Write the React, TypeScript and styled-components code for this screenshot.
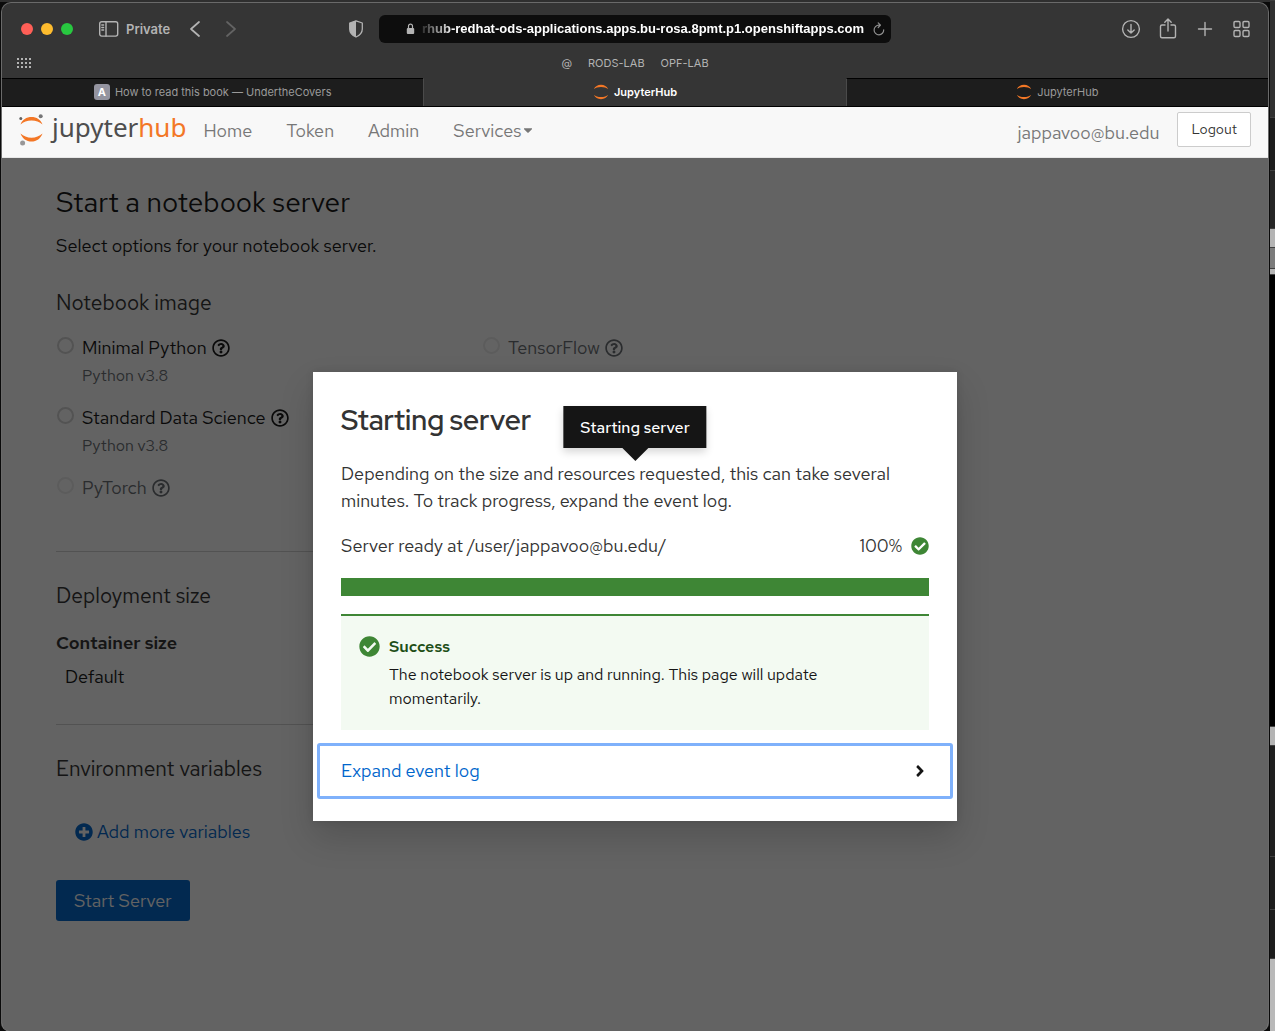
import React from 'react';
import styled, { createGlobalStyle, css } from 'styled-components';
import {
  FaAngleRight,
  FaCaretDown,
  FaCheckCircle,
  FaPlusCircle,
  FaRegQuestionCircle,
} from 'react-icons/fa';

const GlobalStyle = createGlobalStyle`
  *, *::before, *::after { box-sizing: border-box; }
  html, body, #root { height: 100%; margin: 0; }
  body {
    background: #000;
    color: #151515;
    font-family: 'Red Hat Text', Lato, sans-serif;
    font-size: 18px;
    line-height: 27px;
  }
  h1, h2, h3, p { margin: 0; }
  button, input, select { font: inherit; }
  a { color: inherit; text-decoration: none; }
`;

/* ---------- Desktop and window ---------- */

const Desktop = styled.div`
  display: flex;
  min-height: 100vh;
  background: linear-gradient(#2f2f2f 0 2px, #0a0a0a 2px);
`;

const BrowserWindow = styled.div`
  flex: 1;
  min-width: 0;
  display: flex;
  flex-direction: column;
  margin: 2px 1px 0 1px;
  border: 1px solid #6a6a6a;
  border-bottom: 0;
  border-radius: 10px 10px 8px 8px;
  overflow: hidden;
  background: #353535;
`;

const Behind = styled.div`
  width: 5px;
  display: flex;
  flex-direction: column;
`;

const BehindPart = styled.div<{ $share: number; $color: string }>`
  flex: ${(p) => p.$share} 0 0;
  background: ${(p) => p.$color};
  border-top: 1px solid #3f3f3f;
`;

const behindParts = [
  { share: 117, color: '#303030' },
  { share: 53, color: '#1d1d1d' },
  { share: 58, color: '#262626' },
  { share: 18, color: '#b4b4b4' },
  { share: 20, color: '#7b7b7b' },
  { share: 5, color: '#b4b4b4' },
  { share: 456, color: '#000' },
  { share: 19, color: '#b4b4b4' },
  { share: 111, color: '#1f1f1f' },
  { share: 53, color: '#1d1d1d' },
  { share: 48, color: '#1d1d1d' },
  { share: 73, color: '#b9b9b9' },
];

/* ---------- Browser chrome ---------- */

const Chrome = styled.header`
  font-family: Inter, sans-serif;
  font-size: 11px;
  line-height: 16px;
  color: #b3b3b3;
`;

const Toolbar = styled.div`
  display: grid;
  grid-template-columns: 1fr 512px 1fr;
  align-items: center;
  height: 52px;
`;

const ToolbarSide = styled.div<{ $end?: boolean }>`
  display: flex;
  align-items: center;
  height: 28px;
  padding: ${(p) => (p.$end ? '0 18px 0 0' : '0 15px 0 19px')};
  gap: ${(p) => (p.$end ? '18px' : '0')};
  justify-content: ${(p) => (p.$end ? 'flex-end' : 'flex-start')};
`;

const IconButton = styled.button<{ $dim?: boolean }>`
  display: inline-flex;
  align-items: center;
  justify-content: center;
  padding: 0;
  border: 0;
  background: none;
  color: ${(p) => (p.$dim ? '#636363' : '#b3b3b3')};
`;

const Lights = styled.div`
  display: flex;
  gap: 8px;
  margin-right: 26px;
`;

const Light = styled.button<{ $color: string }>`
  width: 12px;
  height: 12px;
  padding: 0;
  border: 0;
  border-radius: 50%;
  background: ${(p) => p.$color};
`;

const PrivateLabel = styled.span`
  margin: 0 20px 0 7px;
  font-size: 13px;
  font-weight: 600;
`;

const History = styled.div`
  display: flex;
  gap: 26px;
  flex: 1;
`;

const AddressBar = styled.div`
  display: flex;
  align-items: center;
  height: 28px;
  padding: 0 5px 0 27px;
  gap: 7px;
  border-radius: 6px;
  background: #0d0d0d;
`;

const Address = styled.input`
  flex: 1;
  min-width: 0;
  padding: 0;
  border: 0;
  outline: 0;
  background: none;
  color: #fff;
  font-family: 'Liberation Sans', Arial, sans-serif;
  font-size: 13px;
  font-weight: 700;
  mask-image: linear-gradient(90deg, rgba(0, 0, 0, 0.15), #000 32px);
`;

const Bookmarks = styled.nav`
  display: grid;
  grid-template-columns: 1fr auto 1fr;
  align-items: center;
  height: 23px;
  padding: 0 15px 7px;
`;

const BookmarkLinks = styled.div`
  display: flex;
  gap: 16px;
`;

const Tabs = styled.div`
  display: flex;
  height: 29px;
  border-bottom: 1px solid #000;
`;

const Tab = styled.button<{ $active?: boolean }>`
  flex: 1 1 0;
  display: flex;
  align-items: center;
  justify-content: center;
  gap: 5px;
  padding: 0 0 2px;
  border: 0;
  border-top: 1px solid ${(p) => (p.$active ? '#353535' : '#000')};
  background: ${(p) => (p.$active ? '#353535' : '#1d1d1d')};
  color: ${(p) => (p.$active ? '#fff' : '#9a9a9a')};
  font-weight: ${(p) => (p.$active ? 600 : 400)};
  & + & { border-left: 1px solid #4a4a4a; }
`;

const LetterBadge = styled.span`
  width: 16px;
  height: 16px;
  border-radius: 3px;
  background: #9494a0;
  color: #fff;
  font-weight: 700;
  text-align: center;
`;

/* ---------- JupyterHub navigation ---------- */

const Navbar = styled.nav`
  display: flex;
  align-items: center;
  height: 51px;
  padding: 0 17px;
  border-bottom: 1px solid #e7e7e7;
  background: #f8f8f8;
  color: #777;
`;

const Brand = styled.a`
  display: flex;
  align-items: center;
  gap: 8px;
  height: 44px;
  margin: 0 17px 4px 0;
  color: #4e4e4e;
  font-family: 'Noto Sans', sans-serif;
  font-size: 26px;
  line-height: 32px;
`;

const BrandText = styled.span`
  padding-bottom: 6px;
`;

const BrandHub = styled.span`
  color: #f37726;
`;

const NavLinks = styled.div`
  display: flex;
  gap: 34px;
  flex: 1;
  padding-bottom: 4px;
`;

const NavLink = styled.a`
  display: inline-flex;
  align-items: center;
`;

const User = styled.span`
  margin-right: 18px;
`;

const Logout = styled.a`
  height: 35px;
  padding: 0 13px;
  margin-bottom: 6px;
  border: 1px solid #ccc;
  border-radius: 2px;
  background: #fff;
  color: #333;
  font-size: 14px;
  line-height: 33px;
`;

/* ---------- Spawner form ---------- */

const Content = styled.main`
  flex: 1;
  display: grid;
  background: #fff;
`;

const Form = styled.form`
  grid-area: 1 / 1;
  max-width: 960px;
  padding: 26px 54px 110px;
`;

const PageTitle = styled.h1`
  font-size: 28px;
  font-weight: 400;
  line-height: 36px;
`;

const Lead = styled.p`
  margin-top: 12px;
`;

const Section = styled.section`
  padding: 31px 0 34px;
  & + & { border-top: 1px solid #d2d2d2; }
`;

const SectionTitle = styled.h2`
  color: #333;
  font-size: 21px;
  font-weight: 400;
  line-height: 26px;
`;

const Options = styled.div`
  display: grid;
  grid-template-columns: 1fr 1fr;
  row-gap: 16px;
  margin: 18px 0 16px;
`;

const OptionItem = styled.div`
  display: flex;
  gap: 8px;
`;

const Radio = styled.input`
  appearance: none;
  flex: none;
  width: 17px;
  height: 17px;
  margin: 3px 0 0 1px;
  border: 2px solid #d4d4d4;
  border-radius: 50%;
  &:disabled { border-color: #ececec; }
`;

const OptionLabel = styled.label<{ $off?: boolean }>`
  display: flex;
  align-items: center;
  gap: 5px;
  color: ${(p) => (p.$off ? '#6a6e73' : '#151515')};
`;

const OptionNote = styled.p`
  margin-top: 3px;
  color: #6a6e73;
  font-size: 16px;
  line-height: 24px;
`;

const FieldLabel = styled.label`
  display: block;
  margin-top: 20px;
  color: #333;
  font-weight: 600;
`;

const SizeSelect = styled.select`
  display: block;
  appearance: none;
  margin-top: 7px;
  padding: 0 9px;
  border: 0;
  background: none;
  color: #151515;
`;

const AddButton = styled.button`
  display: flex;
  align-items: center;
  gap: 4px;
  margin: 36px 0 1px 19px;
  padding: 0;
  border: 0;
  background: none;
  color: #06c;
`;

const StartButton = styled.button`
  display: block;
  height: 41px;
  padding: 0 18px;
  border: 0;
  border-radius: 3px;
  background: #06c;
  color: #fff;
`;

/* ---------- Progress dialog ---------- */

const Backdrop = styled.div`
  grid-area: 1 / 1;
  z-index: 1;
  display: grid;
  place-items: center;
  padding: 4px 24px 0;
  background: rgba(3, 3, 3, 0.62);
`;

const Dialog = styled.div`
  position: relative;
  width: 100%;
  max-width: 644px;
  padding: 30px 4px 22px;
  background: #fff;
  color: #333;
  box-shadow: 0 16px 32px rgba(3, 3, 3, 0.16), 0 0 8px rgba(3, 3, 3, 0.1);
`;

const DialogBody = styled.div`
  padding: 0 24px;
`;

const DialogTitle = styled.h1`
  margin-bottom: 22px;
  font-family: 'Red Hat Display', 'Red Hat Text', Lato, sans-serif;
  font-size: 28px;
  font-weight: 600;
  line-height: 36px;
`;

const Status = styled.div`
  display: flex;
  align-items: center;
  justify-content: space-between;
  margin: 18px 0 19px;
`;

const Percent = styled.span`
  display: flex;
  align-items: center;
  gap: 9px;
`;

const success = css`
  color: #3e8635;
`;

const CheckIcon = styled(FaCheckCircle)`
  flex: none;
  ${success}
`;

const ProgressBar = styled.div`
  height: 18px;
  background: #3e8635;
`;

const Alert = styled.div`
  display: flex;
  gap: 9px;
  margin-top: 18px;
  padding: 19px 18px;
  border-top: 2px solid #3e8635;
  background: #f3faf2;
  color: #151515;
  font-size: 16px;
  line-height: 24px;
`;

const AlertIcon = styled.span`
  padding-top: 1px;
  line-height: 0;
`;

const AlertTitle = styled.h2`
  margin-bottom: 4px;
  color: #1e4f18;
  font-size: 16px;
  font-weight: 600;
  line-height: 24px;
`;

const ExpandButton = styled.button`
  display: flex;
  align-items: center;
  justify-content: space-between;
  width: 100%;
  height: 56px;
  margin-top: 13px;
  padding: 0 21px 1px;
  border: 3px solid #7fb1fb;
  border-radius: 3px;
  background: #fff;
  color: #06c;
`;

const Tooltip = styled.div`
  position: absolute;
  top: 34px;
  left: 50%;
  transform: translateX(-50%);
  padding: 10px 17px 8px;
  background: #151515;
  color: #fff;
  font-size: 16px;
  font-weight: 500;
  line-height: 24px;
  white-space: nowrap;
  box-shadow: 0 4px 8px rgba(3, 3, 3, 0.16);
  &::after {
    content: '';
    position: absolute;
    top: 100%;
    left: 50%;
    margin-left: -13px;
    border: 13px solid transparent;
    border-bottom: 0;
    border-top-color: #151515;
  }
`;

/* ---------- Drawings ---------- */

const Line = styled.svg`
  display: block;
  fill: none;
  stroke: currentColor;
  stroke-width: 1.4;
  stroke-linecap: round;
  stroke-linejoin: round;
`;

const JupyterMark = () => (
  <svg width="16" height="16" viewBox="0 0 16 16" fill="#f37726" aria-hidden="true">
    <path d="M.8 5.2C2 2.4 4.700.8 8 .8s6 1.600 7.200 4.400C13.400 3.700 11 2.900 8 2.900S2.600 3.700.8 5.200z" />
    <path d="M.8 10.800C2 13.600 4.700 15.200 8 15.200s6-1.600 7.200-4.400C13.400 12.300 11 13.100 8 13.100S2.600 12.300.8 10.800z" />
  </svg>
);

const JupyterLogo = () => (
  <svg width="25" height="33" viewBox="0 0 25 33" aria-hidden="true">
    <g fill="#f37726">
      <path d="M1.500 10.500C3.200 5.500 7.500 2.900 12.500 2.900s9.300 2.600 11 7.600C20.500 7.800 16.800 6.600 12.500 6.600S4.500 7.800 1.500 10.500z" />
      <path d="M1.500 19.500c1.700 5 6 8.100 11 8.100s9.300-3.100 11-8.100c-3 2.700-6.700 4.200-11 4.200s-8-1.500-11-4.200z" />
    </g>
    <circle cx="21.700" cy="2.300" r="2" fill="#767677" />
    <circle cx="1.800" cy="4.600" r="1.500" fill="#616262" />
    <circle cx="3.600" cy="29" r="2.500" fill="#989798" />
  </svg>
);

const SidebarIcon = () => (
  <Line width="20" height="16" viewBox="0 0 20 16">
    <rect x=".7" y=".7" width="18" height="14.400" rx="2" />
    <path d="M7 1v14M2.800 4h1.800M2.800 6.500h1.800M2.800 9h1.800" />
  </Line>
);

const ShieldIcon = () => (
  <svg width="16" height="18" viewBox="0 0 16 18" aria-hidden="true">
    <path d="M8 .8 14.300 3v6c0 3.700-2.800 6.400-6.300 8-3.500-1.600-6.300-4.300-6.300-8V3z" fill="none" stroke="#b3b3b3" strokeWidth="1.300" strokeLinejoin="round" />
    <path d="M8 .8v16.200c-3.500-1.600-6.300-4.300-6.300-8V3z" fill="#b3b3b3" />
  </svg>
);

const LockIcon = () => (
  <svg width="9" height="12" viewBox="0 0 9 12" aria-hidden="true">
    <rect x=".8" y="5" width="7.400" height="6" rx="1" fill="#b3b3b3" />
    <path d="M2.500 5.500V3.200a2 2 0 0 1 4 0v2.300" fill="none" stroke="#b3b3b3" strokeWidth="1.200" />
  </svg>
);

const ChevronIcon = ({ forward }: { forward?: boolean }) => (
  <Line width="10" height="16" viewBox="0 0 10 16">
    <path strokeWidth="1.700" d={forward ? 'M1 1l8 7-8 7' : 'M9 1L1 8l8 7'} />
  </Line>
);

const ReloadIcon = () => (
  <Line width="14" height="14" viewBox="0 0 14 14">
    <path d="M11.700 7.800A4.800 4.800 0 1 1 7 3.200h1.200M6.200.9l2.300 2.300-2.300 2.300" strokeWidth="1.200" stroke="#8f8f8f" />
  </Line>
);

const DownloadIcon = () => (
  <Line width="20" height="20" viewBox="0 0 20 20">
    <circle cx="10" cy="10" r="8.400" />
    <path d="M10 5.500v8.500M6.800 10.900l3.200 3.200 3.200-3.200" />
  </Line>
);

const ShareIcon = () => (
  <Line width="18" height="22" viewBox="0 0 18 22">
    <path d="M6 7H3a1.500 1.500 0 0 0-1.500 1.500v9.800A1.500 1.500 0 0 0 3 19.800h12a1.500 1.500 0 0 0 1.500-1.500V8.500A1.500 1.500 0 0 0 15 7h-3M9 13V1.200M5.800 4.200L9 1l3.200 3.200" />
  </Line>
);

const PlusIcon = () => (
  <Line width="20" height="20" viewBox="0 0 20 20">
    <path d="M10 3.500v13M3.500 10h13" />
  </Line>
);

const OverviewIcon = () => (
  <Line width="17" height="18" viewBox="0 0 17 18">
    <rect x="1" y="1.500" width="6" height="6" rx="1.200" />
    <rect x="10" y="1.500" width="6" height="6" rx="1.200" />
    <rect x="1" y="10.500" width="6" height="6" rx="1.200" />
    <rect x="10" y="10.500" width="6" height="6" rx="1.200" />
  </Line>
);

const DotsIcon = () => (
  <svg width="15" height="11" viewBox="0 0 15 11" fill="#b3b3b3" aria-hidden="true">
    {[0, 4, 8].map((y) =>
      [0, 4, 8, 12].map((x) => <rect key={`${x}-${y}`} x={x} y={y} width="2" height="2" />),
    )}
  </svg>
);

/* ---------- Data ---------- */

interface NotebookImage {
  id: string;
  name: string;
  note?: string;
  off?: boolean;
}

const images: NotebookImage[] = [
  { id: 'minimal', name: 'Minimal Python', note: 'Python v3.8' },
  { id: 'tensorflow', name: 'TensorFlow', off: true },
  { id: 'science', name: 'Standard Data Science', note: 'Python v3.8' },
  { id: 'pytorch', name: 'PyTorch', off: true },
];

const ImageOption = ({ id, name, note, off }: NotebookImage) => (
  <OptionItem style={{ gridColumn: id === 'tensorflow' ? 2 : 1 }}>
    <Radio type="radio" name="image" id={id} disabled={off} />
    <div>
      <OptionLabel htmlFor={id} $off={off}>
        {name}
        <FaRegQuestionCircle size={18} />
      </OptionLabel>
      {note && <OptionNote>{note}</OptionNote>}
    </div>
  </OptionItem>
);

export default function App() {
  return (
    <>
      <GlobalStyle />
      <Desktop>
        <BrowserWindow>
          <Chrome>
            <Toolbar>
              <ToolbarSide>
                <Lights>
                  <Light $color="#ff5f57" aria-label="Close" />
                  <Light $color="#febc2e" aria-label="Minimize" />
                  <Light $color="#28c840" aria-label="Zoom" />
                </Lights>
                <IconButton aria-label="Sidebar"><SidebarIcon /></IconButton>
                <PrivateLabel>Private</PrivateLabel>
                <History>
                  <IconButton aria-label="Back"><ChevronIcon /></IconButton>
                  <IconButton $dim aria-label="Forward"><ChevronIcon forward /></IconButton>
                </History>
                <IconButton aria-label="Privacy report"><ShieldIcon /></IconButton>
              </ToolbarSide>
              <AddressBar>
                <LockIcon />
                <Address
                  aria-label="Address"
                  readOnly
                  value="rhub-redhat-ods-applications.apps.bu-rosa.8pmt.p1.openshiftapps.com"
                />
                <IconButton aria-label="Reload"><ReloadIcon /></IconButton>
              </AddressBar>
              <ToolbarSide $end>
                <IconButton aria-label="Downloads"><DownloadIcon /></IconButton>
                <IconButton aria-label="Share"><ShareIcon /></IconButton>
                <IconButton aria-label="New tab"><PlusIcon /></IconButton>
                <IconButton aria-label="Tab overview"><OverviewIcon /></IconButton>
              </ToolbarSide>
            </Toolbar>
            <Bookmarks>
              <DotsIcon />
              <BookmarkLinks>
                <a href="#at">@</a>
                <a href="#rods">RODS-LAB</a>
                <a href="#opf">OPF-LAB</a>
              </BookmarkLinks>
            </Bookmarks>
            <Tabs>
              <Tab>
                <LetterBadge>A</LetterBadge>
                How to read this book — UndertheCovers
              </Tab>
              <Tab $active><JupyterMark />JupyterHub</Tab>
              <Tab><JupyterMark />JupyterHub</Tab>
            </Tabs>
          </Chrome>

          <Navbar>
            <Brand href="#home">
              <JupyterLogo />
              <BrandText>jupyter<BrandHub>hub</BrandHub></BrandText>
            </Brand>
            <NavLinks>
              <NavLink href="#home">Home</NavLink>
              <NavLink href="#token">Token</NavLink>
              <NavLink href="#admin">Admin</NavLink>
              <NavLink href="#services">Services<FaCaretDown size={14} /></NavLink>
            </NavLinks>
            <User>jappavoo@bu.edu</User>
            <Logout href="#logout">Logout</Logout>
          </Navbar>

          <Content>
            <Form>
              <PageTitle>Start a notebook server</PageTitle>
              <Lead>Select options for your notebook server.</Lead>
              <Section>
                <SectionTitle>Notebook image</SectionTitle>
                <Options>
                  {images.map((image) => <ImageOption key={image.id} {...image} />)}
                </Options>
              </Section>
              <Section>
                <SectionTitle>Deployment size</SectionTitle>
                <FieldLabel htmlFor="size">Container size</FieldLabel>
                <SizeSelect id="size"><option>Default</option></SizeSelect>
              </Section>
              <Section>
                <SectionTitle>Environment variables</SectionTitle>
                <AddButton type="button"><FaPlusCircle size={18} />Add more variables</AddButton>
              </Section>
              <StartButton type="button">Start Server</StartButton>
            </Form>

            <Backdrop>
              <Dialog role="dialog" aria-labelledby="dialog-title">
                <DialogBody>
                  <DialogTitle id="dialog-title">Starting server</DialogTitle>
                  <p>
                    Depending on the size and resources requested, this can take several
                    minutes. To track progress, expand the event log.
                  </p>
                  <Status>
                    <span>Server ready at /user/jappavoo@bu.edu/</span>
                    <Percent>100%<CheckIcon size={18} /></Percent>
                  </Status>
                  <ProgressBar role="progressbar" aria-label="Server start" aria-valuenow={100} />
                  <Alert>
                    <AlertIcon><CheckIcon size={21} /></AlertIcon>
                    <div>
                      <AlertTitle>Success</AlertTitle>
                      <p>The notebook server is up and running. This page will update momentarily.</p>
                    </div>
                  </Alert>
                </DialogBody>
                <ExpandButton>
                  Expand event log
                  <FaAngleRight size={18} color="#151515" />
                </ExpandButton>
                <Tooltip role="tooltip">Starting server</Tooltip>
              </Dialog>
            </Backdrop>
          </Content>
        </BrowserWindow>
        <Behind>
          {behindParts.map((part, i) => (
            <BehindPart key={i} $share={part.share} $color={part.color} />
          ))}
        </Behind>
      </Desktop>
    </>
  );
}
